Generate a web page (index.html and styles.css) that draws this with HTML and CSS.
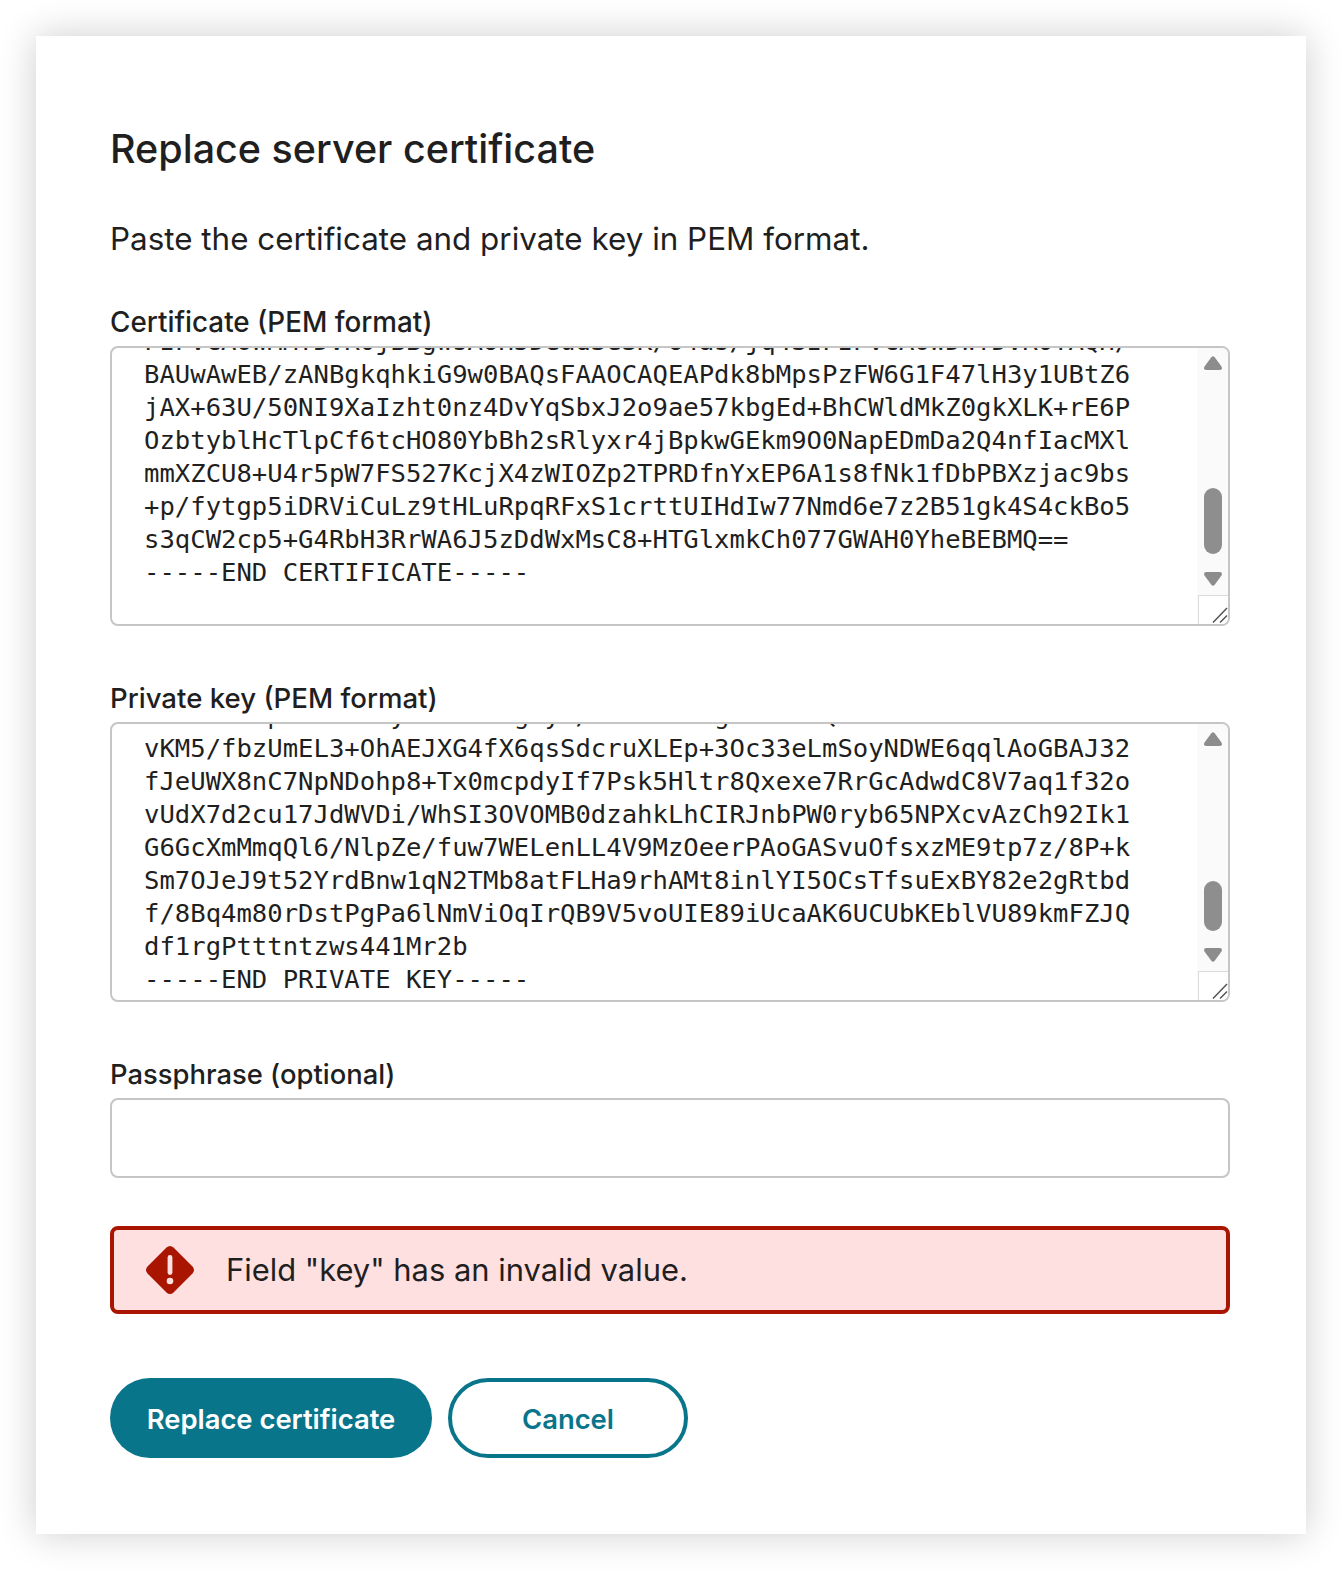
FILE: index.html
```html
<!DOCTYPE html>
<html lang="en">
<head>
<meta charset="utf-8">
<title>Replace server certificate</title>
<link rel="stylesheet" href="styles.css">
</head>
<body>
<main class="dialog">
  <h1 class="title">Replace server certificate</h1>
  <p class="intro">Paste the certificate and private key in PEM format.</p>

  <label class="label label-cert">Certificate (PEM format)</label>
  <div class="pem-box">
    <pre class="pem-text pem-cert">FIFVCAOwMMTDVR0jBBgwsAUH5Deud3e3K/U4as/jq4SIFIFVCAOwDwYDVR0TAQH/
BAUwAwEB/zANBgkqhkiG9w0BAQsFAAOCAQEAPdk8bMpsPzFW6G1F47lH3y1UBtZ6
jAX+63U/50NI9XaIzht0nz4DvYqSbxJ2o9ae57kbgEd+BhCWldMkZ0gkXLK+rE6P
OzbtyblHcTlpCf6tcHO80YbBh2sRlyxr4jBpkwGEkm9O0NapEDmDa2Q4nfIacMXl
mmXZCU8+U4r5pW7FS527KcjX4zWIOZp2TPRDfnYxEP6A1s8fNk1fDbPBXzjac9bs
+p/fytgp5iDRViCuLz9tHLuRpqRFxS1crttUIHdIw77Nmd6e7z2B51gk4S4ckBo5
s3qCW2cp5+G4RbH3RrWA6J5zDdWxMsC8+HTGlxmkCh077GWAH0YheBEBMQ==
-----END CERTIFICATE-----</pre>
    <div class="scrollbar">
      <svg class="arrow" viewBox="0 0 18 14"><path d="M7.5 1 Q9 -.3 10.5 1 L17.5 10.5 Q18.8 14 16 14 H2 Q-.8 14 .5 10.5Z"/></svg>
      <div class="track"><div class="thumb thumb-cert"></div></div>
      <svg class="arrow" viewBox="0 0 18 14"><path d="M7.5 13 Q9 14.3 10.5 13 L17.5 3.5 Q18.8 0 16 0 H2 Q-.8 0 .5 3.5Z"/></svg>
    </div>
    <div class="resizer">
      <svg class="grip" viewBox="0 0 16 16"><path d="M1 15.5 L15 1 M8 15.5 L15 8.5"/></svg>
    </div>
  </div>

  <label class="label label-key">Private key (PEM format)</label>
  <div class="pem-box">
    <pre class="pem-text pem-key">xT3mNa9RpKD2sVoEyHb7LWtAgUy4/ZtC8RnXegM1KoBWQd5TfHa2VrE8NcUoL7sI
vKM5/fbzUmEL3+OhAEJXG4fX6qsSdcruXLEp+3Oc33eLmSoyNDWE6qqlAoGBAJ32
fJeUWX8nC7NpNDohp8+Tx0mcpdyIf7Psk5Hltr8Qxexe7RrGcAdwdC8V7aq1f32o
vUdX7d2cu17JdWVDi/WhSI3OVOMB0dzahkLhCIRJnbPW0ryb65NPXcvAzCh92Ik1
G6GcXmMmqQl6/NlpZe/fuw7WELenLL4V9MzOeerPAoGASvuOfsxzME9tp7z/8P+k
Sm7OJeJ9t52YrdBnw1qN2TMb8atFLHa9rhAMt8inlYI5OCsTfsuExBY82e2gRtbd
f/8Bq4m80rDstPgPa6lNmViOqIrQB9V5voUIE89iUcaAK6UCUbKEblVU89kmFZJQ
df1rgPtttntzws441Mr2b
-----END PRIVATE KEY-----</pre>
    <div class="scrollbar">
      <svg class="arrow" viewBox="0 0 18 14"><path d="M7.5 1 Q9 -.3 10.5 1 L17.5 10.5 Q18.8 14 16 14 H2 Q-.8 14 .5 10.5Z"/></svg>
      <div class="track"><div class="thumb thumb-key"></div></div>
      <svg class="arrow" viewBox="0 0 18 14"><path d="M7.5 13 Q9 14.3 10.5 13 L17.5 3.5 Q18.8 0 16 0 H2 Q-.8 0 .5 3.5Z"/></svg>
    </div>
    <div class="resizer">
      <svg class="grip" viewBox="0 0 16 16"><path d="M1 15.5 L15 1 M8 15.5 L15 8.5"/></svg>
    </div>
  </div>

  <label class="label label-pass" for="pass">Passphrase (optional)</label>
  <input class="pass-input" id="pass" type="password">

  <div class="error-box">
    <svg class="error-icon" viewBox="0 0 50 50">
      <path d="M21.5 2.5 Q25 -0.5 28.5 2.5 L47.5 21.5 Q50.5 25 47.5 28.5 L28.5 47.5 Q25 50.5 21.5 47.5 L2.5 28.5 Q-0.5 25 2.5 21.5Z" fill="#a91500"/>
      <rect x="22.6" y="10" width="4.8" height="20" rx="2.4" fill="#ffe0e0"/>
      <circle cx="25" cy="36" r="3.3" fill="#ffe0e0"/>
    </svg>
    <span class="error-text">Field "key" has an invalid value.</span>
  </div>

  <div class="actions">
    <button class="btn btn-primary" type="button">Replace certificate</button>
    <button class="btn btn-secondary" type="button">Cancel</button>
  </div>
</main>
</body>
</html>
```
FILE: styles.css
```css
* { box-sizing: border-box; }
html, body { margin: 0; padding: 0; background: #fff; }
body {
  padding: 36px;
  font-family: "Inter", "Liberation Sans", sans-serif;
  color: #1f1f1f;
}
.dialog {
  width: 1270px;
  height: 1498px;
  padding: 90px 76px 0 74px;
  background: #fff;
  box-shadow: 0 0 36px rgba(0, 0, 0, .2);
  display: flex;
  flex-direction: column;
}
.title {
  margin: 0;
  font-size: 39.5px;
  line-height: 46px;
  font-weight: 500;
}
.intro {
  margin: 47px 0 0;
  font-size: 31.4px;
  line-height: 40px;
  font-weight: 400;
}
.label {
  display: block;
  line-height: 32px;
  font-weight: 500;
  margin-bottom: 8px;
}
.label-cert { margin-top: 47px; font-size: 27.8px; }
.label-key { margin-top: 56px; font-size: 27.6px; }
.label-pass { margin-top: 56px; font-size: 27.4px; }
.pem-box {
  position: relative;
  height: 280px;
  border: 2px solid #c6c6c6;
  border-radius: 8px;
  overflow: hidden;
  display: flex;
  flex-shrink: 0;
}
.pem-text {
  flex: 1;
  margin: 0;
  padding-left: 32px;
  font-family: "DejaVu Sans Mono", monospace;
  font-size: 25.6px;
  line-height: 33px;
  color: #1f1f1f;
  overflow: hidden;
}
.pem-cert { margin-top: -23px; }
.pem-key { margin-top: -25px; }
.scrollbar {
  width: 31px;
  background: #fafafa;
  display: flex;
  flex-direction: column;
  align-items: center;
  padding: 8px 0 0;
}
.arrow {
  width: 18px;
  height: 14px;
  fill: #8c8c8c;
  flex-shrink: 0;
}
.track { position: relative; width: 18px; height: 202px; }
.thumb {
  position: absolute;
  left: 0;
  width: 18px;
  background: #8e8e8e;
  border-radius: 9px;
}
.thumb-cert { top: 118px; height: 66px; }
.thumb-key { top: 135px; height: 50px; }
.resizer {
  position: absolute;
  right: 0;
  bottom: 0;
  width: 30px;
  height: 29px;
  background: #fff;
  border-top: 1px solid #dcdcdc;
  border-left: 1px solid #dcdcdc;
}
.grip {
  position: absolute;
  right: 0;
  bottom: 1px;
  width: 16px;
  height: 16px;
  fill: none;
  stroke: #555;
  stroke-width: 1.5;
}
.pass-input {
  display: block;
  width: 100%;
  height: 80px;
  border: 2px solid #c6c6c6;
  border-radius: 8px;
  background: #fff;
  flex-shrink: 0;
}
.error-box {
  margin-top: 48px;
  height: 88px;
  border: 4px solid #a91500;
  border-radius: 8px;
  background: #ffe0e0;
  display: flex;
  align-items: center;
  padding-left: 31px;
  gap: 31px;
  flex-shrink: 0;
}
.error-icon { width: 50px; height: 50px; flex-shrink: 0; }
.error-text { font-size: 30.9px; line-height: 40px; }
.actions {
  margin-top: 64px;
  display: flex;
  gap: 16px;
}
.btn {
  height: 80px;
  padding: 2px 0 0;
  border-radius: 40px;
  font-family: inherit;
  font-size: 27.4px;
  font-weight: 600;
  cursor: pointer;
}
.btn-primary {
  width: 322px;
  background: #08758a;
  border: 0;
  color: #fff;
}
.btn-secondary {
  width: 240px;
  background: #fff;
  border: 4px solid #08758a;
  color: #08758a;
}
```
